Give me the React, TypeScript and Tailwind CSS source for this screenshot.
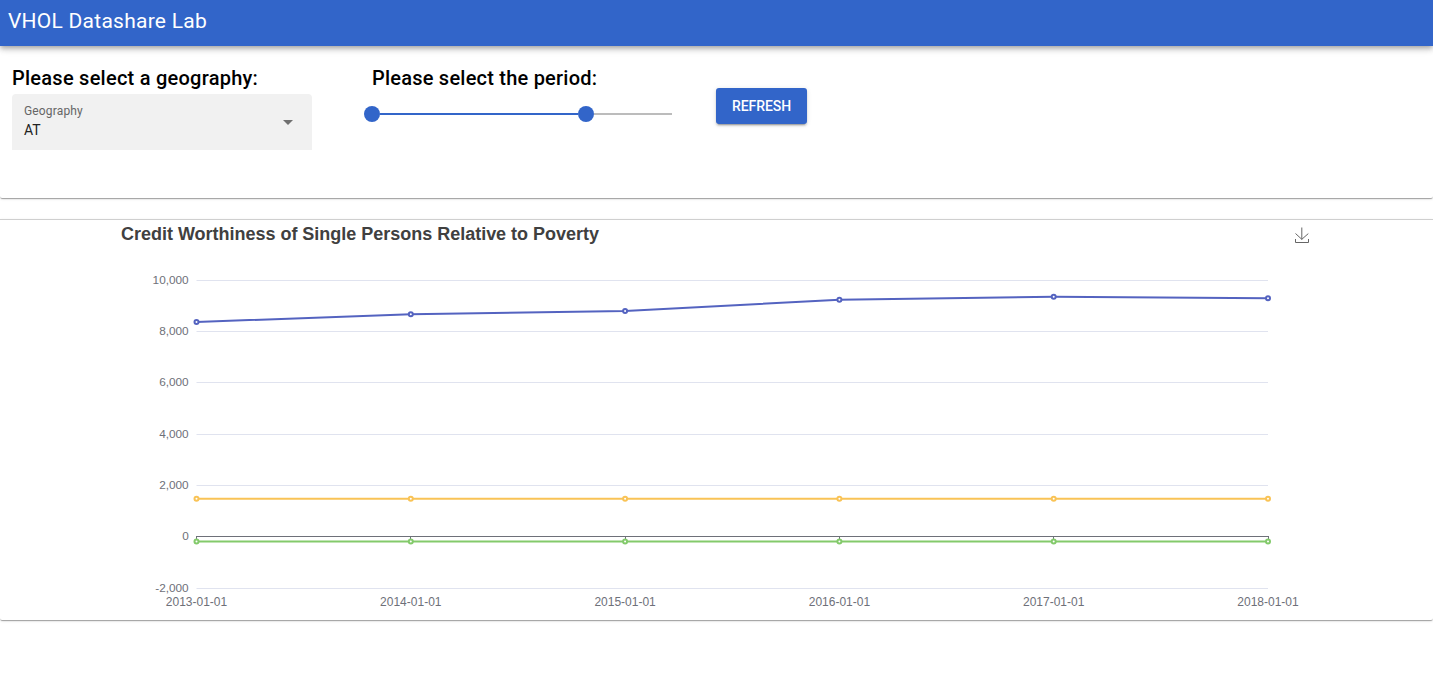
const X = [196.5, 410.8, 625.1, 839.4, 1053.7, 1268];
const DATES = ["2013-01-01", "2014-01-01", "2015-01-01", "2016-01-01", "2017-01-01", "2018-01-01"];
const GRID: [string, number][] = [
  ["10,000", 280],
  ["8,000", 331],
  ["6,000", 382],
  ["4,000", 434],
  ["2,000", 485],
  ["0", 536],
  ["-2,000", 588],
];
const SERIES = [
  { color: "#5463c0", y: [322, 314.2, 311, 299.7, 296.7, 298.3] },
  { color: "#83ca6b", y: [541.5, 541.5, 541.5, 541.5, 541.5, 541.5] },
  { color: "#f9c356", y: [498.7, 498.7, 498.7, 498.7, 498.7, 498.7] },
];

function Chart() {
  return (
    <svg viewBox="0 220 1433 400" className="block h-[400px] w-[1433px] shrink-0 font-['Liberation_Sans',Arial,sans-serif]">
      <text x="121" y="240" fontSize="18" fontWeight="700" fill="#404040" textLength="478">
        Credit Worthiness of Single Persons Relative to Poverty
      </text>
      <g fill="none" stroke="#666" strokeWidth="1">
        <path d="M1295.5 233.5L1301.8 239.3L1308.3 233.6" />
        <path d="M1295.5 239V242.5H1308.5V239" />
        <path d="M1301.8 239.5V227.5" />
      </g>
      {GRID.map(([label, y]) => (
        <g key={label}>
          <text x="188.7" y={y + 4.4} fontSize="11.8" fill="#6e7079" textAnchor="end">{label}</text>
          {label !== "0" && <path d={`M196.5 ${y + 0.5}H1268`} stroke="#e0e3ef" />}
        </g>
      ))}
      <path d="M196 536.5H1269" stroke="#6e7079" />
      {X.map((x, i) => (
        <g key={x}>
          <path d={`M${Math.floor(x) + 0.5} 537V541`} stroke="#6e7079" />
          <text x={x} y="606" fontSize="12" fill="#6e7079" textAnchor="middle">{DATES[i]}</text>
        </g>
      ))}
      {SERIES.map((s) => (
        <g key={s.color} stroke={s.color} strokeWidth="2">
          <polyline fill="none" points={X.map((x, i) => `${x},${s.y[i]}`).join(" ")} />
          {X.map((x, i) => (
            <circle key={x} cx={x} cy={s.y[i]} r="2" fill="#fff" strokeWidth="2" />
          ))}
        </g>
      ))}
    </svg>
  );
}

export default function App() {
  return (
    <div className="flex h-[677px] w-full flex-col overflow-hidden bg-white font-[Roboto,sans-serif] text-black">
      <header className="relative z-10 flex h-[46px] shrink-0 items-center bg-[#3265c9] px-2 pb-1 shadow-[0_2px_4px_-1px_rgba(0,0,0,.2),0_4px_5px_0_rgba(0,0,0,.14),0_1px_10px_0_rgba(0,0,0,.12)]">
        <h1 className="text-[21px] leading-8 tracking-[0.25px] text-white">VHOL Datashare Lab</h1>
      </header>
      <section className="flex h-[152px] shrink-0 items-start rounded-b-[2px] pl-3 shadow-[0_2px_1px_-1px_rgba(0,0,0,.2),0_1px_1px_0_rgba(0,0,0,.14),0_1px_3px_0_rgba(0,0,0,.12)]">
        <div className="w-[300px] pt-4">
          <h2 className="h-8 text-[20px] leading-8 font-medium tracking-[0.25px]">Please select a geography:</h2>
          <button className="flex h-14 w-full items-center justify-between rounded-t-[4px] bg-[#f1f1f1] pr-[19px] pl-3 text-left">
            <span className="flex flex-col">
              <span className="text-[12px] leading-[14px] tracking-[0.15px] text-[#666]">Geography</span>
              <span className="mt-0.5 text-[14px] leading-[20px] text-[#222]">AT</span>
            </span>
            <svg viewBox="0 0 10 5" className="h-[5px] w-[10px]"><path d="M0 0H10L5 5Z" fill="#707070" /></svg>
          </button>
        </div>
        <div className="ml-[52px] w-[308px] pt-4">
          <h2 className="h-8 pl-2 text-[20px] leading-8 font-medium tracking-[0.22px]">Please select the period:</h2>
          <div className="mt-3 flex h-4 items-center">
            <span className="size-4 rounded-full bg-[#3265c9]" />
            <span className="h-0.5 w-[198px] bg-[#3265c9]" />
            <span className="size-4 rounded-full bg-[#3265c9]" />
            <span className="h-0.5 w-[78px] bg-[#bcbcbc]" />
          </div>
        </div>
        <button className="mt-[42px] ml-[44px] h-9 w-[91px] rounded-[3px] bg-[#3265c9] text-center text-[14px] font-medium tracking-[-0.05px] text-white shadow-[0_3px_1px_-2px_rgba(0,0,0,.2),0_2px_2px_0_rgba(0,0,0,.14),0_1px_5px_0_rgba(0,0,0,.12)]">
          REFRESH
        </button>
      </section>
      <section className="mt-[21px] h-[401px] shrink-0 rounded-b-[2px] border-t border-[#cfcfcf] shadow-[0_2px_1px_-1px_rgba(0,0,0,.2),0_1px_1px_0_rgba(0,0,0,.14),0_1px_3px_0_rgba(0,0,0,.12)]">
        <Chart />
      </section>
    </div>
  );
}
